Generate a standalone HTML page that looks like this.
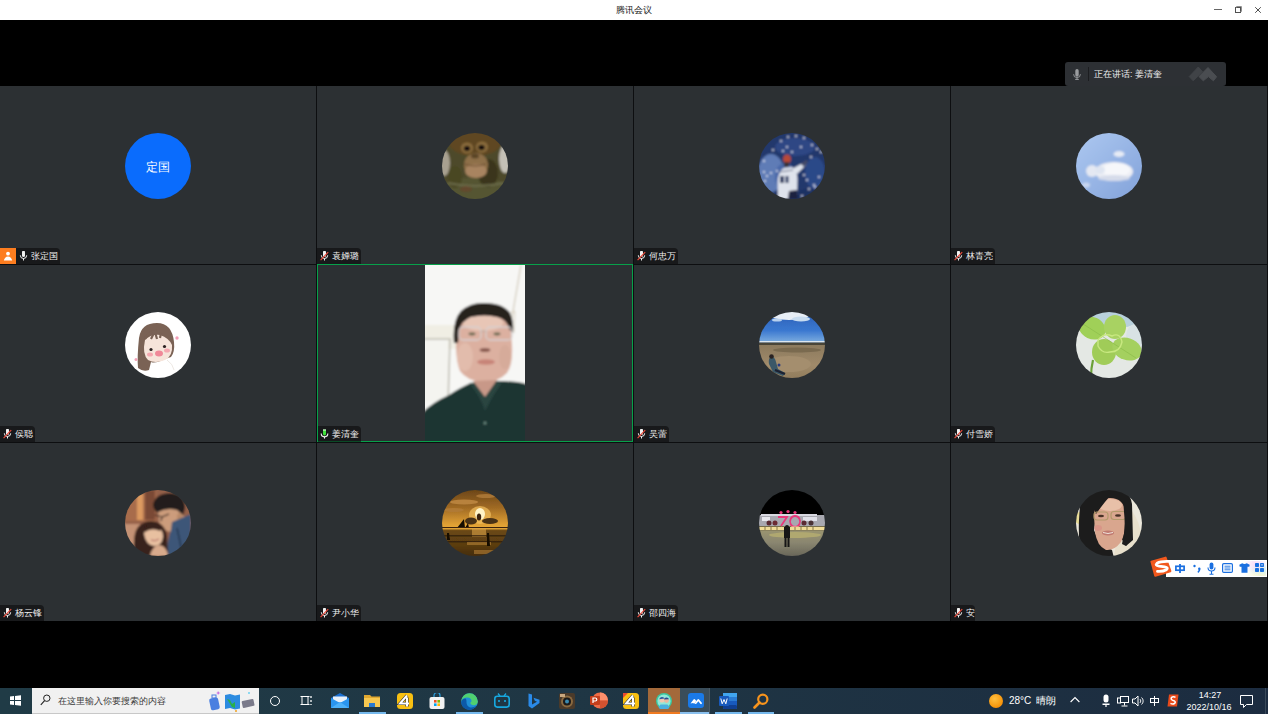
<!DOCTYPE html>
<html><head><meta charset="utf-8">
<style>
*{margin:0;padding:0;box-sizing:border-box}
html,body{width:1268px;height:714px;overflow:hidden;background:#000;font-family:"Liberation Sans",sans-serif}
.abs{position:absolute}
#title{left:0;top:0;width:1268px;height:20px;background:#fff}
#title .t{left:0;width:1268px;top:4px;text-align:center;font-size:9px;color:#111;line-height:12px}
.tile{position:absolute;background:#2c3033}
.div{position:absolute;background:#0d0e10}
.av{position:absolute;width:66px;height:66px;border-radius:50%;overflow:hidden}
.lbl{position:absolute;height:16px;background:#18191b;border-top-right-radius:4px;color:#f0f0f0;font-size:9px;line-height:16px;white-space:nowrap}
.lbl .nm{position:absolute;left:15px;top:0}
.mic{position:absolute;left:3px;top:3px;width:9px;height:10px}
#tb{left:0;top:688px;width:1268px;height:26px;background:linear-gradient(90deg,#203b46 0%,#1f3644 45%,#1c2c40 100%)}
</style></head><body>
<div id="title" class="abs"><div class="t abs">腾讯会议</div></div>
<div class="abs" style="left:1214px;top:9px;width:8px;height:1px;background:#666"></div>
<svg class="abs" style="left:1235px;top:6px" width="7" height="7" viewBox="0 0 7 7"><rect x="0.5" y="1.5" width="5" height="5" fill="none" stroke="#505050" stroke-width="1"/><path d="M1.5 1.5V0.5H6.5V5.5H5.5" fill="none" stroke="#909090" stroke-width="1"/></svg>
<svg class="abs" style="left:1255px;top:7px" width="6" height="6" viewBox="0 0 6 6"><path d="M0.2 0.2L5.8 5.8M5.8 0.2L0.2 5.8" stroke="#505050" stroke-width="1"/></svg>

<!-- tiles -->
<div class="tile" style="left:0;top:86px;width:1268px;height:535px"></div>
<!-- vertical dividers -->
<div class="div" style="left:316px;top:86px;width:1px;height:535px"></div>
<div class="div" style="left:633px;top:86px;width:1px;height:535px"></div>
<div class="div" style="left:950px;top:86px;width:1px;height:535px"></div>
<div class="div" style="left:1267px;top:86px;width:1px;height:535px"></div>
<!-- horizontal dividers -->
<div class="div" style="left:0;top:264px;width:1268px;height:1px"></div>
<div class="div" style="left:0;top:442px;width:1268px;height:1px"></div>

<!-- avatars row1 -->
<div class="abs" style="left:125px;top:133px;width:66px;height:66px;border-radius:50%;background:#0a6cfd"></div><div class="abs" style="left:125px;top:160px;width:66px;text-align:center;font-size:11.5px;line-height:14px;color:#fff">定国</div>
<svg class="abs" style="left:442px;top:133px" width="66" height="66" viewBox="0 0 66 66"><defs><clipPath id="c442_133"><circle cx="33" cy="33" r="33"/></clipPath><filter id="f442_133" x="-20%" y="-20%" width="140%" height="140%"><feGaussianBlur stdDeviation="0.9"/></filter></defs><g clip-path="url(#c442_133)"><g filter="url(#f442_133)"><rect x="-5" y="-5" width="76" height="76" fill="#4e4a2a"/><ellipse cx="2" cy="30" rx="6" ry="13" fill="#a8a090"/><ellipse cx="63" cy="26" rx="6" ry="14" fill="#c4c0b6"/><ellipse cx="33" cy="10" rx="26" ry="13" fill="#5e4620"/><ellipse cx="33" cy="58" rx="34" ry="14" fill="#545430"/><ellipse cx="46" cy="40" rx="10" ry="14" fill="#3a361a"/><ellipse cx="13" cy="44" rx="7" ry="11" fill="#4a4624"/><ellipse cx="34" cy="32" rx="12" ry="12" fill="#8e7048"/><ellipse cx="34" cy="38" rx="11" ry="7" fill="#a88460"/><ellipse cx="25" cy="15" rx="6" ry="5.5" fill="#8a6c3c"/><ellipse cx="40" cy="14" rx="6" ry="5.5" fill="#8a6c3c"/><ellipse cx="25" cy="15.5" rx="3.2" ry="2.8" fill="#140f08"/><ellipse cx="39.5" cy="14.5" rx="3.2" ry="2.8" fill="#140f08"/><ellipse cx="33" cy="23" rx="4" ry="2.5" fill="#5a4428"/><path d="M22 31 Q33 35 44 31" stroke="#6a4c30" stroke-width="1" fill="none"/><path d="M6 50 Q33 56 62 50" stroke="#6a6a48" stroke-width="2" fill="none"/><ellipse cx="24" cy="56" rx="6" ry="3" fill="#7a3a2a" opacity="0.4"/></g></g></svg>
<svg class="abs" style="left:759px;top:133px" width="66" height="66" viewBox="0 0 66 66"><defs><clipPath id="c759_133"><circle cx="33" cy="33" r="33"/></clipPath><filter id="f759_133" x="-20%" y="-20%" width="140%" height="140%"><feGaussianBlur stdDeviation="0.9"/></filter></defs><g clip-path="url(#c759_133)"><g filter="url(#f759_133)"><rect x="-5" y="-5" width="76" height="76" fill="#22376c"/><ellipse cx="12" cy="40" rx="13" ry="19" fill="#5e7cb6"/><ellipse cx="26" cy="44" rx="10" ry="14" fill="#4a68a8"/><ellipse cx="36" cy="14" rx="20" ry="9" fill="#2e4684"/><ellipse cx="56" cy="40" rx="10" ry="16" fill="#2c4888"/><ellipse cx="50" cy="62" rx="14" ry="6" fill="#1e3064"/><path d="M19 66 L18.5 50 Q19 38 25 35 L33 34 Q38 37 38.5 46 L38 66z" fill="#dfe3ec"/><path d="M33 36 L44 30 L47 32 L38 41z" fill="#e0e4ec"/><path d="M42 31 L47 27 L49 29 L45 34z" fill="#454c68"/><ellipse cx="28" cy="26" rx="4" ry="4.5" fill="#b84838"/><rect x="25" y="29" width="5" height="5" fill="#3a3038"/><path d="M21 43 h4 v7 h-4z M26.5 43 h3 v7 h-3z" fill="#2a3a64"/><path d="M20 39 L34 37" stroke="#6a7088" stroke-width="1"/><path d="M30 58 L38 57 L39 66 L29 66z" fill="#1e2440"/><circle cx="14" cy="17" r="0.9" fill="#f4f6ff"/><circle cx="22" cy="8" r="0.9" fill="#f4f6ff"/><circle cx="29" cy="4" r="0.9" fill="#f4f6ff"/><circle cx="37" cy="3" r="0.9" fill="#f4f6ff"/><circle cx="45" cy="5" r="0.9" fill="#f4f6ff"/><circle cx="53" cy="12" r="0.9" fill="#f4f6ff"/><circle cx="58" cy="16" r="0.9" fill="#f4f6ff"/><circle cx="62" cy="19" r="0.9" fill="#f4f6ff"/><circle cx="5" cy="28" r="0.9" fill="#f4f6ff"/><circle cx="5" cy="39" r="0.9" fill="#f4f6ff"/><circle cx="8" cy="43" r="0.9" fill="#f4f6ff"/><circle cx="12" cy="40" r="0.9" fill="#f4f6ff"/><circle cx="18" cy="38" r="0.9" fill="#f4f6ff"/><circle cx="42" cy="14" r="0.9" fill="#f4f6ff"/><circle cx="28" cy="14" r="0.9" fill="#f4f6ff"/><circle cx="55" cy="52" r="0.9" fill="#f4f6ff"/><circle cx="45" cy="42" r="0.9" fill="#f4f6ff"/><circle cx="48" cy="47" r="0.9" fill="#f4f6ff"/><circle cx="50" cy="56" r="0.9" fill="#f4f6ff"/><circle cx="56" cy="54" r="0.9" fill="#f4f6ff"/><circle cx="43" cy="63" r="0.9" fill="#f4f6ff"/><circle cx="6" cy="48" r="0.9" fill="#f4f6ff"/><circle cx="24" cy="18" r="0.9" fill="#f4f6ff"/><circle cx="33" cy="19" r="0.9" fill="#f4f6ff"/><circle cx="60" cy="44" r="0.9" fill="#f4f6ff"/><circle cx="52" cy="24" r="0.9" fill="#f4f6ff"/></g></g></svg>
<svg class="abs" style="left:1076px;top:133px" width="66" height="66" viewBox="0 0 66 66"><defs><clipPath id="c1076_133"><circle cx="33" cy="33" r="33"/></clipPath><filter id="f1076_133" x="-20%" y="-20%" width="140%" height="140%"><feGaussianBlur stdDeviation="0.8"/></filter></defs><g clip-path="url(#c1076_133)"><g filter="url(#f1076_133)"><defs><linearGradient id="skyg" x1="0" y1="0" x2="1" y2="1"><stop offset="0" stop-color="#b0cbf2"/><stop offset="1" stop-color="#7f9fd8"/></linearGradient></defs><rect x="-5" y="-5" width="76" height="76" fill="url(#skyg)"/><ellipse cx="38" cy="38.5" rx="19" ry="9.5" fill="#eceef4"/><ellipse cx="40" cy="37" rx="14" ry="7" fill="#f6f7fa"/><ellipse cx="16" cy="38" rx="6" ry="6" fill="#e4e8f2"/><ellipse cx="24" cy="37" rx="5" ry="4" fill="#dfe5f1"/><ellipse cx="43" cy="21" rx="5.5" ry="3" fill="#e6ebf5"/><ellipse cx="10" cy="52" rx="4" ry="2.5" fill="#c8d6f0"/><ellipse cx="38" cy="45" rx="16" ry="3" fill="#d6dcea"/></g></g></svg>
<svg class="abs" style="left:125px;top:312px" width="66" height="66" viewBox="0 0 66 66"><defs><clipPath id="c125_312"><circle cx="33" cy="33" r="33"/></clipPath><filter id="f125_312" x="-20%" y="-20%" width="140%" height="140%"><feGaussianBlur stdDeviation="0.5"/></filter></defs><g clip-path="url(#c125_312)"><g filter="url(#f125_312)"><rect x="-5" y="-5" width="76" height="76" fill="#ffffff"/><path d="M14 26 Q16 11 32 11 Q47 11 49 30 Q50 40 46 45 L40 47 Q30 52 26 50 L24 58 Q18 60 13 56 Q12 45 14 26z" fill="#7a6254"/><path d="M20 28 Q26 22 35 23 Q44 26 47 33 Q48 44 40 48 Q30 52 23 48 Q17 42 20 28z" fill="#f6e4da"/><path d="M20 27 Q23 20 30 19 L26 27 M30 20 L32 27 M36 21 L35 26" stroke="#7a6254" stroke-width="2.2" fill="none"/><circle cx="26" cy="37.5" r="1.6" fill="#2a2020"/><circle cx="39.5" cy="34.5" r="1.6" fill="#2a2020"/><ellipse cx="25" cy="42.5" rx="3" ry="2" fill="#f4a8b0"/><ellipse cx="42" cy="38.5" rx="3" ry="2" fill="#f4a8b0"/><ellipse cx="34" cy="41.5" rx="4" ry="3" fill="#f08898"/><circle cx="52" cy="26" r="1.7" fill="#f4a0b8"/><circle cx="11" cy="47.5" r="1.5" fill="#f4a0b8"/><path d="M42 48 Q48 52 49 58" stroke="#e0d8d0" stroke-width="0.6" fill="none"/></g></g></svg>
<svg class="abs" style="left:425px;top:265px" width="100" height="176" viewBox="0 0 100 176"><defs><filter id="f425_265" x="-20%" y="-20%" width="140%" height="140%"><feGaussianBlur stdDeviation="0.8"/></filter></defs><g><g filter="url(#f425_265)"><rect x="-5" y="-5" width="110" height="190" fill="#f7f7f5"/><rect x="-5" y="60" width="40" height="24" fill="#f0eee4"/><rect x="-5" y="75" width="28" height="62" fill="#f4f4f0"/><path d="M-5 74 L25 74 L23 140" stroke="#c0beb4" stroke-width="1.6" fill="none"/><path d="M86 58 L96 0" stroke="#d0c8b8" stroke-width="1.2"/><path d="M84 48 L90 46 L89 68" stroke="#dcd4c4" stroke-width="1" fill="none"/><path d="M31 70 Q30 50 50 47 Q72 45 85 56 L87 80 Q88 100 82 108 Q72 118 58 117 Q42 116 35 106 Q31 96 31 80z" fill="#dcb0a0"/><ellipse cx="58" cy="58" rx="20" ry="8" fill="#e8c6b6"/><ellipse cx="40" cy="92" rx="8" ry="14" fill="#e2bcac"/><ellipse cx="80" cy="92" rx="6" ry="12" fill="#d6ab9a"/><path d="M29 78 Q27 56 36 46 Q46 37 60 38 Q78 38 85 48 Q89 56 88 68 L84 64 Q82 54 72 52 Q60 49 46 52 Q36 56 34 66 L33 78z" fill="#26201e"/><rect x="34" y="62" width="22" height="13" rx="4" fill="none" stroke="#d6d0d0" stroke-width="1.3"/><rect x="61" y="62" width="26" height="13" rx="4" fill="none" stroke="#d6d0d0" stroke-width="1.3"/><path d="M56 66 L61 66" stroke="#b8a8a0" stroke-width="1"/><ellipse cx="47" cy="69" rx="3.5" ry="1.4" fill="#6a6a50"/><ellipse cx="72" cy="69" rx="3.5" ry="1.4" fill="#6a6a50"/><ellipse cx="60" cy="85" rx="5.5" ry="2" fill="#8a5a50"/><ellipse cx="61" cy="97" rx="9" ry="2.8" fill="#c88478"/><path d="M-5 150 Q6 138 24 130 Q36 122 46 118 L74 116 Q92 116 105 120 L105 185 L-5 185z" fill="#1c3431"/><path d="M44 118 Q56 132 60 146 Q68 130 78 116z" fill="#294440"/><path d="M48 116 L60 132 L72 115z" fill="#c89888"/><circle cx="60" cy="158" r="1.5" fill="#6a8a80"/></g></g></svg>
<svg class="abs" style="left:759px;top:312px" width="66" height="66" viewBox="0 0 66 66"><defs><clipPath id="c759_312"><circle cx="33" cy="33" r="33"/></clipPath><filter id="f759_312" x="-20%" y="-20%" width="140%" height="140%"><feGaussianBlur stdDeviation="0.6"/></filter></defs><g clip-path="url(#c759_312)"><g filter="url(#f759_312)"><defs><linearGradient id="dsky" x1="0" y1="0" x2="0" y2="1"><stop offset="0" stop-color="#2858b0"/><stop offset="0.65" stop-color="#3a78d0"/><stop offset="1" stop-color="#80b0e0"/></linearGradient><linearGradient id="dgr" x1="0" y1="0" x2="0" y2="1"><stop offset="0" stop-color="#8c7a5e"/><stop offset="0.5" stop-color="#a08a6a"/><stop offset="1" stop-color="#8a7656"/></linearGradient></defs><rect x="-5" y="-5" width="76" height="36" fill="url(#dsky)"/><ellipse cx="30" cy="3" rx="20" ry="5" fill="#e8eef6"/><ellipse cx="42" cy="7" rx="9" ry="2.5" fill="#c8dcf0"/><ellipse cx="18" cy="8" rx="5" ry="1.5" fill="#b8d0ee"/><rect x="-5" y="29" width="76" height="1.5" fill="#dde6ee"/><rect x="-5" y="30.5" width="76" height="2.5" fill="#4a4438"/><rect x="-5" y="33" width="76" height="40" fill="url(#dgr)"/><ellipse cx="38" cy="38" rx="24" ry="2.5" fill="#7a6a50"/><ellipse cx="30" cy="52" rx="22" ry="8" fill="#a48e6e"/><path d="M12 44 Q9 47 10 52 L14 60 L24 64 L26 61 L19 57 L17 50 Q16 45 12 44z" fill="#3a5868"/><circle cx="12.5" cy="44.5" r="2.3" fill="#2a2420"/><path d="M16 58 L26 62" stroke="#1a2030" stroke-width="2.2"/><circle cx="20" cy="53" r="1.5" fill="#2a3a80"/></g></g></svg>
<svg class="abs" style="left:1076px;top:312px" width="66" height="66" viewBox="0 0 66 66"><defs><clipPath id="c1076_312"><circle cx="33" cy="33" r="33"/></clipPath><filter id="f1076_312" x="-20%" y="-20%" width="140%" height="140%"><feGaussianBlur stdDeviation="0.7"/></filter></defs><g clip-path="url(#c1076_312)"><g filter="url(#f1076_312)"><rect x="-5" y="-5" width="76" height="76" fill="#e4e8e4"/><ellipse cx="40" cy="6" rx="24" ry="10" fill="#b8d0dc"/><ellipse cx="60" cy="24" rx="10" ry="12" fill="#d8e2e4"/><ellipse cx="16" cy="16" rx="14" ry="11" fill="#a0d058" transform="rotate(25 16 16)"/><ellipse cx="39" cy="15" rx="11" ry="12" fill="#a8d262"/><ellipse cx="28" cy="40" rx="12" ry="13" fill="#a0cc58"/><ellipse cx="51" cy="37" rx="15" ry="11" fill="#a4d05e" transform="rotate(20 51 37)"/><path d="M4 10 L60 46" stroke="#88b848" stroke-width="0.6"/><path d="M22 28 Q28 20 36 24 Q44 20 46 30 Q44 40 34 40 Q26 42 22 34z" fill="none" stroke="#c8e880" stroke-width="1.4"/><path d="M17 48 Q15 56 15 66" stroke="#6aa038" stroke-width="2.2" fill="none"/></g></g></svg>
<svg class="abs" style="left:125px;top:490px" width="66" height="66" viewBox="0 0 66 66"><defs><clipPath id="c125_490"><circle cx="33" cy="33" r="33"/></clipPath><filter id="f125_490" x="-20%" y="-20%" width="140%" height="140%"><feGaussianBlur stdDeviation="0.8"/></filter></defs><g clip-path="url(#c125_490)"><g filter="url(#f125_490)"><rect x="-5" y="-5" width="76" height="76" fill="#946048"/><rect x="-5" y="-5" width="36" height="36" fill="#a86c4c"/><rect x="12" y="4" width="6" height="26" fill="#dc9a60"/><rect x="20" y="0" width="10" height="30" fill="#7a4a34"/><rect x="-5" y="34" width="20" height="24" fill="#c49274"/><path d="M28 14 Q31 3 46 3 Q60 4 60 18 L58 26 L34 24 Q28 20 28 14z" fill="#221c1c"/><path d="M33 22 Q42 17 52 20 L59 26 Q62 34 56 39 L46 42 Q36 40 34 32z" fill="#cc9c7c"/><ellipse cx="55" cy="27" rx="3" ry="4" fill="#b88868"/><path d="M30 25 L37 27 L44 24 M37 27 L36 31" stroke="#1a1010" stroke-width="1.1" fill="none"/><path d="M47 32 L66 24 L66 66 L42 66 Q42 50 46 40z" fill="#3c5678"/><path d="M52 38 L58 66" stroke="#24344e" stroke-width="1.4"/><path d="M9 52 Q9 32 26 31 Q40 32 42 46 L43 66 L12 66 Q8 60 9 52z" fill="#38201a"/><path d="M19 44 Q20 35 29 35 Q38 37 38 47 Q37 56 29 56 Q21 55 19 44z" fill="#e8c0a0"/><path d="M18 38 Q26 32 37 37 L35 41 Q27 37 20 42z" fill="#38201a"/><path d="M25 66 Q27 56 34 55 Q42 56 43 66z" fill="#d8aa8c"/><path d="M26 50 Q30 52 34 49" stroke="#a85858" stroke-width="1" fill="none"/></g></g></svg>
<svg class="abs" style="left:442px;top:490px" width="66" height="66" viewBox="0 0 66 66"><defs><clipPath id="c442_490"><circle cx="33" cy="33" r="33"/></clipPath><filter id="f442_490" x="-20%" y="-20%" width="140%" height="140%"><feGaussianBlur stdDeviation="0.7"/></filter></defs><g clip-path="url(#c442_490)"><g filter="url(#f442_490)"><defs><linearGradient id="ssky" x1="0" y1="0" x2="0" y2="1"><stop offset="0" stop-color="#5e3c14"/><stop offset="0.3" stop-color="#a06a24"/><stop offset="0.52" stop-color="#e0a034"/><stop offset="0.57" stop-color="#e8a838"/><stop offset="0.6" stop-color="#6a4814"/><stop offset="0.8" stop-color="#5a3c10"/><stop offset="1" stop-color="#3a2408"/></linearGradient></defs><rect x="-5" y="-5" width="76" height="76" fill="url(#ssky)"/><ellipse cx="22" cy="12" rx="14" ry="2.5" fill="#b8823c"/><ellipse cx="44" cy="6" rx="10" ry="2" fill="#a87434"/><ellipse cx="12" cy="20" rx="10" ry="2" fill="#b07a34"/><ellipse cx="38" cy="25" rx="11" ry="9" fill="#f4c060" opacity="0.7"/><ellipse cx="38" cy="24" rx="5" ry="6" fill="#fff4c8"/><ellipse cx="29" cy="31" rx="6" ry="3.5" fill="#4a3014"/><ellipse cx="48" cy="31" rx="8" ry="3" fill="#4a3014"/><ellipse cx="37" cy="27" rx="2.2" ry="3.5" fill="#3a2410"/><path d="M15 38 L22 29 L23 38z M23 38 L26 33 L27 38z" fill="#140c04"/><rect x="-5" y="37" width="76" height="1" fill="#3a2408"/><rect x="30" y="38" width="14" height="9" fill="#d8a048" opacity="0.6"/><rect x="-5" y="45" width="76" height="1.5" fill="#2a1a06" opacity="0.7"/><rect x="-5" y="51" width="76" height="1.5" fill="#2a1a06" opacity="0.7"/><rect x="25" y="52" width="24" height="3" fill="#c89040" opacity="0.5"/><rect x="32" y="60" width="20" height="4" fill="#c89040" opacity="0.5"/><path d="M45 43 L47 43 L48 56 L45 56z" fill="#140c04"/><path d="M5 43 L7 43 L8 50 L5 50z" fill="#140c04"/></g></g></svg>
<svg class="abs" style="left:759px;top:490px" width="66" height="66" viewBox="0 0 66 66"><defs><clipPath id="c759_490"><circle cx="33" cy="33" r="33"/></clipPath><filter id="f759_490" x="-20%" y="-20%" width="140%" height="140%"><feGaussianBlur stdDeviation="0.6"/></filter></defs><g clip-path="url(#c759_490)"><g filter="url(#f759_490)"><defs><linearGradient id="npl" x1="0" y1="0" x2="0" y2="1"><stop offset="0" stop-color="#9a9470"/><stop offset="0.4" stop-color="#8a8670"/><stop offset="1" stop-color="#5e5c52"/></linearGradient></defs><rect x="-5" y="-5" width="76" height="76" fill="#000"/><rect x="-5" y="25" width="76" height="11" fill="#a8a8b0"/><rect x="2" y="24" width="56" height="2" fill="#d8d8e0"/><rect x="3" y="27" width="8" height="4" fill="#e8e8ee"/><rect x="44" y="27" width="14" height="4" fill="#e0e0e8"/><circle cx="10" cy="33" r="2.5" fill="#5a2a30"/><circle cx="16" cy="33" r="2.5" fill="#6a2a30"/><circle cx="45" cy="33" r="2.5" fill="#5a2a30"/><circle cx="52" cy="33" r="2.5" fill="#4a3034"/><path d="M19 27 h9 l-6 9 M36 26 a5 5.5 0 1 0 0.1 0z" stroke="#e8387a" stroke-width="1.8" fill="none"/><circle cx="22" cy="22.5" r="1.6" fill="#e8387a"/><circle cx="29" cy="21.5" r="1.6" fill="#e8387a"/><circle cx="36" cy="22.5" r="1.6" fill="#e8387a"/><rect x="-5" y="36.5" width="76" height="4" fill="#f0dc98"/><path d="M6 37v3M12 37v3M18 37v3M36 37v3M42 37v3M48 37v3M54 37v3" stroke="#6a5a30" stroke-width="0.8"/><rect x="-5" y="40.5" width="76" height="30" fill="url(#npl)"/><ellipse cx="36" cy="45" rx="26" ry="3" fill="#b0a870"/><rect x="25" y="37" width="6" height="11" fill="#141414"/><rect x="25.5" y="48" width="2" height="9" fill="#141414"/><rect x="28.5" y="48" width="2" height="9" fill="#141414"/><circle cx="28" cy="37" r="2" fill="#141414"/></g></g></svg>
<svg class="abs" style="left:1076px;top:490px" width="66" height="66" viewBox="0 0 66 66"><defs><clipPath id="c1076_490"><circle cx="33" cy="33" r="33"/></clipPath><filter id="f1076_490" x="-20%" y="-20%" width="140%" height="140%"><feGaussianBlur stdDeviation="0.7"/></filter></defs><g clip-path="url(#c1076_490)"><g filter="url(#f1076_490)"><rect x="-5" y="-5" width="76" height="76" fill="#ece8dc"/><ellipse cx="3" cy="28" rx="4" ry="6" fill="#e8dc98"/><path d="M48 14 Q66 24 68 66 L38 66 Q42 40 48 14z" fill="#e8e0cc"/><path d="M4 14 Q8 -2 32 -2 Q54 -2 56 14 L57 50 L50 56 L44 46 L48 20 Q40 8 22 14 L18 40 Q22 54 36 60 L38 68 L6 68 Q2 50 3 30z" fill="#1e1c1c"/><path d="M18 26 Q18 8 34 8 Q49 8 50 26 Q50 42 45 52 Q38 61 30 60 Q21 56 19 42z" fill="#d9a68e"/><ellipse cx="34" cy="15" rx="12" ry="6" fill="#e8c0a8"/><path d="M16 16 Q22 4 36 4 Q30 10 20 24z" fill="#1e1c1c"/><rect x="18" y="22" width="14" height="8" rx="3" fill="none" stroke="#b49a6c" stroke-width="1.2"/><rect x="35" y="21.5" width="15" height="8" rx="3" fill="none" stroke="#b49a6c" stroke-width="1.2"/><ellipse cx="25" cy="26" rx="3" ry="1.2" fill="#4a3028"/><ellipse cx="42" cy="25.5" rx="3" ry="1.2" fill="#4a3028"/><ellipse cx="22" cy="38" rx="4" ry="3" fill="#d88a84" opacity="0.6"/><ellipse cx="32" cy="43" rx="6" ry="2.4" fill="#c07a70"/><path d="M27 42.5 Q32 44.5 37 42.5" stroke="#f0e4dc" stroke-width="1" fill="none"/><path d="M47 8 Q55 20 55 36 Q54 48 50 56 L46 54 Q50 40 48 22z" fill="#1e1c1c"/></g></g></svg>
<!-- green active border -->
<div class="abs" style="left:317px;top:264px;width:316px;height:178px;border:1px solid #07a04a"></div>

<div class="abs" style="left:0;top:248px;width:16px;height:16px;background:#fd7d1f"><svg class="abs" style="left:3px;top:3px" width="10" height="10" viewBox="0 0 10 10"><circle cx="5" cy="2.6" r="1.9" fill="#fff"/><path d="M0.8 9.6 Q1.6 5.6 5 5.4 Q8.4 5.6 9.2 9.6z" fill="#fff"/></svg></div>
<div class="lbl" style="left:16px;top:248px;width:44px"><svg class="mic" viewBox="0 0 9 10"><path d="M3 1.2a1.5 1.5 0 0 1 3 0V4.6a1.5 1.5 0 0 1-3 0z" fill="#f2f2f2"/><path d="M1.3 4.3a3.2 3.2 0 0 0 6.4 0" stroke="#f2f2f2" stroke-width="1" fill="none"/><path d="M4.5 7.5V9.5" stroke="#f2f2f2" stroke-width="1"/></svg><span class="nm">张定国</span></div>
<div class="lbl" style="left:317px;top:248px;width:44px"><svg class="mic" viewBox="0 0 9 10"><path d="M3 1.2a1.5 1.5 0 0 1 3 0V4.6a1.5 1.5 0 0 1-3 0z" fill="#f2f2f2"/><path d="M1.3 4.3a3.2 3.2 0 0 0 6.4 0" stroke="#f2f2f2" stroke-width="1" fill="none"/><path d="M4.5 7.5V9.5" stroke="#f2f2f2" stroke-width="1"/><path d="M0.6 9.2L8.2 1.2" stroke="#e8493b" stroke-width="1.2"/></svg><span class="nm">袁婵璐</span></div>
<div class="lbl" style="left:634px;top:248px;width:44px"><svg class="mic" viewBox="0 0 9 10"><path d="M3 1.2a1.5 1.5 0 0 1 3 0V4.6a1.5 1.5 0 0 1-3 0z" fill="#f2f2f2"/><path d="M1.3 4.3a3.2 3.2 0 0 0 6.4 0" stroke="#f2f2f2" stroke-width="1" fill="none"/><path d="M4.5 7.5V9.5" stroke="#f2f2f2" stroke-width="1"/><path d="M0.6 9.2L8.2 1.2" stroke="#e8493b" stroke-width="1.2"/></svg><span class="nm">何忠万</span></div>
<div class="lbl" style="left:951px;top:248px;width:44px"><svg class="mic" viewBox="0 0 9 10"><path d="M3 1.2a1.5 1.5 0 0 1 3 0V4.6a1.5 1.5 0 0 1-3 0z" fill="#f2f2f2"/><path d="M1.3 4.3a3.2 3.2 0 0 0 6.4 0" stroke="#f2f2f2" stroke-width="1" fill="none"/><path d="M4.5 7.5V9.5" stroke="#f2f2f2" stroke-width="1"/><path d="M0.6 9.2L8.2 1.2" stroke="#e8493b" stroke-width="1.2"/></svg><span class="nm">林青亮</span></div>
<div class="lbl" style="left:0px;top:426px;width:35px"><svg class="mic" viewBox="0 0 9 10"><path d="M3 1.2a1.5 1.5 0 0 1 3 0V4.6a1.5 1.5 0 0 1-3 0z" fill="#f2f2f2"/><path d="M1.3 4.3a3.2 3.2 0 0 0 6.4 0" stroke="#f2f2f2" stroke-width="1" fill="none"/><path d="M4.5 7.5V9.5" stroke="#f2f2f2" stroke-width="1"/><path d="M0.6 9.2L8.2 1.2" stroke="#e8493b" stroke-width="1.2"/></svg><span class="nm">侯聪</span></div>
<div class="lbl" style="left:318px;top:426px;width:43px;height:15px"><div class="abs" style="left:0;top:15px;width:43px;height:1px;background:#0a4a26"></div><svg class="mic" style="left:2px" viewBox="0 0 9 10"><path d="M3 0.5h3v4.5a1.5 1.5 0 0 1-3 0z" fill="#3fe03a"/><path d="M3 0.5h3v1h-3z" fill="#f2f2f2"/><path d="M1.2 4.6a3.3 3.3 0 0 0 6.6 0" stroke="#f2f2f2" stroke-width="1.1" fill="none"/><path d="M4.5 7.8V9.6" stroke="#f2f2f2" stroke-width="1.1"/></svg><span class="nm" style="left:14px">姜清奎</span></div>
<div class="lbl" style="left:634px;top:426px;width:35px"><svg class="mic" viewBox="0 0 9 10"><path d="M3 1.2a1.5 1.5 0 0 1 3 0V4.6a1.5 1.5 0 0 1-3 0z" fill="#f2f2f2"/><path d="M1.3 4.3a3.2 3.2 0 0 0 6.4 0" stroke="#f2f2f2" stroke-width="1" fill="none"/><path d="M4.5 7.5V9.5" stroke="#f2f2f2" stroke-width="1"/><path d="M0.6 9.2L8.2 1.2" stroke="#e8493b" stroke-width="1.2"/></svg><span class="nm">吴蕾</span></div>
<div class="lbl" style="left:951px;top:426px;width:44px"><svg class="mic" viewBox="0 0 9 10"><path d="M3 1.2a1.5 1.5 0 0 1 3 0V4.6a1.5 1.5 0 0 1-3 0z" fill="#f2f2f2"/><path d="M1.3 4.3a3.2 3.2 0 0 0 6.4 0" stroke="#f2f2f2" stroke-width="1" fill="none"/><path d="M4.5 7.5V9.5" stroke="#f2f2f2" stroke-width="1"/><path d="M0.6 9.2L8.2 1.2" stroke="#e8493b" stroke-width="1.2"/></svg><span class="nm">付雪娇</span></div>
<div class="lbl" style="left:0px;top:605px;width:44px"><svg class="mic" viewBox="0 0 9 10"><path d="M3 1.2a1.5 1.5 0 0 1 3 0V4.6a1.5 1.5 0 0 1-3 0z" fill="#f2f2f2"/><path d="M1.3 4.3a3.2 3.2 0 0 0 6.4 0" stroke="#f2f2f2" stroke-width="1" fill="none"/><path d="M4.5 7.5V9.5" stroke="#f2f2f2" stroke-width="1"/><path d="M0.6 9.2L8.2 1.2" stroke="#e8493b" stroke-width="1.2"/></svg><span class="nm">杨云锋</span></div>
<div class="lbl" style="left:317px;top:605px;width:44px"><svg class="mic" viewBox="0 0 9 10"><path d="M3 1.2a1.5 1.5 0 0 1 3 0V4.6a1.5 1.5 0 0 1-3 0z" fill="#f2f2f2"/><path d="M1.3 4.3a3.2 3.2 0 0 0 6.4 0" stroke="#f2f2f2" stroke-width="1" fill="none"/><path d="M4.5 7.5V9.5" stroke="#f2f2f2" stroke-width="1"/><path d="M0.6 9.2L8.2 1.2" stroke="#e8493b" stroke-width="1.2"/></svg><span class="nm">尹小华</span></div>
<div class="lbl" style="left:634px;top:605px;width:44px"><svg class="mic" viewBox="0 0 9 10"><path d="M3 1.2a1.5 1.5 0 0 1 3 0V4.6a1.5 1.5 0 0 1-3 0z" fill="#f2f2f2"/><path d="M1.3 4.3a3.2 3.2 0 0 0 6.4 0" stroke="#f2f2f2" stroke-width="1" fill="none"/><path d="M4.5 7.5V9.5" stroke="#f2f2f2" stroke-width="1"/><path d="M0.6 9.2L8.2 1.2" stroke="#e8493b" stroke-width="1.2"/></svg><span class="nm">邵四海</span></div>
<div class="lbl" style="left:951px;top:605px;width:24px"><svg class="mic" viewBox="0 0 9 10"><path d="M3 1.2a1.5 1.5 0 0 1 3 0V4.6a1.5 1.5 0 0 1-3 0z" fill="#f2f2f2"/><path d="M1.3 4.3a3.2 3.2 0 0 0 6.4 0" stroke="#f2f2f2" stroke-width="1" fill="none"/><path d="M4.5 7.5V9.5" stroke="#f2f2f2" stroke-width="1"/><path d="M0.6 9.2L8.2 1.2" stroke="#e8493b" stroke-width="1.2"/></svg><span class="nm">安</span></div>
<div class="abs" style="left:1065px;top:62px;width:161px;height:24px;background:#2d3034;border-radius:3px"></div>
<svg class="abs" style="left:1073px;top:69px" width="8" height="11" viewBox="0 0 8 11"><path d="M2.3 1.8a1.7 1.7 0 0 1 3.4 0V6a1.7 1.7 0 0 1-3.4 0z" fill="#9a9c9f"/><path d="M0.6 5.2a3.4 3.4 0 0 0 6.8 0" stroke="#9a9c9f" stroke-width="0.9" fill="none"/><path d="M4 8.6V10.3M2.2 10.4h3.6" stroke="#9a9c9f" stroke-width="1"/></svg>
<div class="abs" style="left:1088px;top:67px;width:1px;height:14px;background:#1c1d20"></div>
<div class="abs" style="left:1094px;top:68px;font-size:8.5px;line-height:12px;color:#eee;white-space:nowrap">正在讲话: 姜清奎</div>
<svg class="abs" style="left:1188px;top:66px" width="30" height="16" viewBox="0 0 30 16"><path d="M10.3 1 L14.5 5.8 L5.2 14.8 L1.2 10.6z" fill="#404347" stroke="#404347" stroke-width="1" stroke-linejoin="round"/><path d="M20 1.5 L28.6 10.8 L25.4 14.8 L20.4 10.6 L15.3 14.8 L11 10.6z" fill="#4a4d51" stroke="#4a4d51" stroke-width="1" stroke-linejoin="round"/></svg>

<!-- sogou ime bar -->
<div class="abs" style="left:1166px;top:560px;width:101px;height:17px;background:#fff"></div>
<div class="abs" style="left:1240px;top:561px;width:26px;height:15px;background:radial-gradient(ellipse at 60% 20%,rgba(240,180,240,0.5),rgba(255,255,255,0) 55%),radial-gradient(ellipse at 100% 60%,rgba(170,230,250,0.5),rgba(255,255,255,0) 55%),radial-gradient(ellipse at 80% 100%,rgba(250,240,170,0.6),rgba(255,255,255,0) 55%)"></div>
<svg class="abs" style="left:1150px;top:556px" width="23" height="22" viewBox="0 0 23 22"><path d="M1.4 5.6 L15.6 1.6 L20.4 15.2 L5.2 19.8z" fill="#f1581d" stroke="#f1581d" stroke-width="2" stroke-linejoin="round"/><path d="M18 5.4 Q10.5 5.2 7 7.2 Q4.4 9.4 9.2 10.2 L14.6 10.8 Q19 11.6 16.4 13.8 Q12.8 15.8 7.4 15.4" stroke="#fff" stroke-width="2.7" fill="none" stroke-linecap="round"/></svg>
<svg class="abs" style="left:1175px;top:564px" width="10" height="9" viewBox="0 0 10 9"><rect x="0.9" y="2.3" width="8.2" height="3.9" fill="none" stroke="#1a6fe0" stroke-width="1.7"/><path d="M5 0V9" stroke="#1a6fe0" stroke-width="1.8"/></svg>
<svg class="abs" style="left:1193px;top:564px" width="8" height="9" viewBox="0 0 8 9"><circle cx="1.5" cy="2" r="1.2" fill="#1a6fe0"/><path d="M6 4.5q0.8 0.3 0.5 1.6Q6 7.6 4.8 8.3" stroke="#1a6fe0" stroke-width="1.5" fill="none"/><circle cx="6.3" cy="4.8" r="1.2" fill="#1a6fe0"/></svg>
<svg class="abs" style="left:1207px;top:562px" width="9" height="13" viewBox="0 0 9 13"><rect x="2.6" y="0.5" width="3.8" height="7" rx="1.9" fill="#1a6fe0"/><path d="M1 5.5a3.5 3.5 0 0 0 7 0" stroke="#1a6fe0" stroke-width="1.1" fill="none"/><path d="M4.5 9v3M2.5 12.3h4" stroke="#1a6fe0" stroke-width="1.1"/></svg>
<svg class="abs" style="left:1222px;top:563px" width="11" height="10" viewBox="0 0 11 10"><rect x="0.6" y="0.6" width="9.8" height="8.8" rx="1.2" fill="none" stroke="#1a6fe0" stroke-width="1.2"/><path d="M2.5 3.2h6M2.5 5h6M2.5 6.8h6" stroke="#1a6fe0" stroke-width="0.9"/></svg>
<svg class="abs" style="left:1239px;top:563px" width="11" height="10" viewBox="0 0 11 10"><path d="M0.3 1.8L3.2 0.2Q5.5 1.6 7.8 0.2L10.7 1.8 10.3 3.8 8.5 3.8 8.5 9.8H2.5V3.8H0.7z" fill="#1a6fe0"/></svg>
<svg class="abs" style="left:1255px;top:563px" width="9" height="9" viewBox="0 0 9 9"><rect x="0" y="0" width="4" height="4" rx="0.8" fill="#1a6fe0"/><rect x="5" y="0" width="4" height="4" rx="0.8" fill="#1a6fe0"/><rect x="0" y="5" width="4" height="4" rx="0.8" fill="#1a6fe0"/><rect x="5" y="5" width="4" height="4" rx="0.8" fill="#1a6fe0"/><path d="M5.8 1.9h2.4" stroke="#fff" stroke-width="0.7"/></svg>
<div id="tb" class="abs"></div>
<div id="tbi">
<!-- win logo -->
<svg class="abs" style="left:10px;top:695px" width="11" height="11" viewBox="0 0 11 11"><path d="M0 1.6L4 1.1V5H0z M5 1L11 0.2V5H5z M0 6H4V10L0 9.4z M5 6H11V10.8L5 10z" fill="#fff"/></svg>
<!-- search box -->
<div class="abs" style="left:32px;top:688px;width:227px;height:26px;background:#f1f1f1;border-bottom:1px solid #c8c8c8"></div>
<svg class="abs" style="left:40px;top:694px" width="11" height="12" viewBox="0 0 11 12"><circle cx="6.8" cy="4.2" r="3.2" fill="none" stroke="#222" stroke-width="1"/><path d="M4.6 6.6L0.8 10.8" stroke="#222" stroke-width="1.1"/></svg>
<div class="abs" style="left:58px;top:695px;font-size:9.2px;line-height:12px;color:#3a3a3a;white-space:nowrap">在这里输入你要搜索的内容</div>
<svg class="abs" style="left:207px;top:690px" width="50" height="22" viewBox="0 0 50 22"><rect x="3" y="8" width="9" height="12" rx="2" fill="#4a7fe0" transform="rotate(-12 7 14)"/><rect x="5" y="5" width="4" height="3" fill="none" stroke="#4a7fe0" stroke-width="1"/><path d="M11 1l1 1.5 1.5 0.5-1.5 0.5-1 1.5-0.5-1.5-1.5-0.5 1.5-0.5z" fill="#c86be0"/><path d="M18 5l5-1 5 1.5 5-1v14l-5 1-5-1.5-5 1z" fill="#2c8be0"/><path d="M20 9l3 1 2 4 3-2v6l-3-1z" fill="#2ab04a"/><rect x="35" y="10" width="12" height="7" rx="1" fill="#7a7a8a" transform="rotate(-12 41 13)"/><circle cx="42" cy="3" r="1" fill="#6cd0f0"/><circle cx="29" cy="21" r="1" fill="#f0a020"/></svg>
<!-- cortana -->
<div class="abs" style="left:270px;top:696px;width:10px;height:10px;border:1.3px solid #fff;border-radius:50%"></div>
<!-- task view -->
<svg class="abs" style="left:300px;top:695px" width="13" height="11" viewBox="0 0 13 11"><path d="M0.5 1.5h9M0.5 9.5h9M2 1.5v8M8 1.5v8" stroke="#fff" stroke-width="1" fill="none"/><path d="M11 1v2M11 5v2M11 9v1" stroke="#fff" stroke-width="1.3"/></svg>
<!-- mail -->
<svg class="abs" style="left:331px;top:693px" width="18" height="15" viewBox="0 0 18 15"><path d="M0 5 L9 0 L18 5 V15 H0z" fill="#1a6fd0"/><path d="M2 3.5h14v6H2z" fill="#e8f0f8"/><path d="M0 5 L9 10 L18 5 V15 H0z" fill="#2a95ee"/><path d="M0 15L9 9L18 15z" fill="#4cb0f8"/></svg>
<!-- folder -->
<svg class="abs" style="left:364px;top:694px" width="16" height="14" viewBox="0 0 16 14"><path d="M0 1h6l1.5 1.5H16V13H0z" fill="#e0a830"/><path d="M0 4h16v9H0z" fill="#f8c850"/><path d="M5 9h6v4H5z" fill="#2a7ad0"/></svg>
<div class="abs" style="left:359px;top:712px;width:27px;height:2px;background:#76b9ed"></div>
<!-- yellow 4 -->
<svg class="abs" style="left:397px;top:693px" width="16" height="16" viewBox="0 0 16 16"><rect width="16" height="16" rx="3.5" fill="#f8c012"/><path d="M10 2.5L3 10.5H12M10 4.5V13.5" stroke="#333" stroke-width="3.2" fill="none"/><path d="M10 2.5L3 10.5H12M10 4.5V13.5" stroke="#fff" stroke-width="2" fill="none"/></svg>
<!-- store -->
<svg class="abs" style="left:429px;top:693px" width="16" height="16" viewBox="0 0 16 16"><path d="M5 4V2.5a3 3 0 0 1 6 0V4" stroke="#2aa0e0" stroke-width="1.2" fill="none"/><rect x="0.5" y="4" width="15" height="12" rx="2" fill="#f2f2f2"/><rect x="5" y="7" width="2.6" height="2.6" fill="#f25022"/><rect x="8.4" y="7" width="2.6" height="2.6" fill="#7fba00"/><rect x="5" y="10.4" width="2.6" height="2.6" fill="#00a4ef"/><rect x="8.4" y="10.4" width="2.6" height="2.6" fill="#ffb900"/></svg>
<!-- edge -->
<svg class="abs" style="left:461px;top:693px" width="17" height="17" viewBox="0 0 17 17"><circle cx="8.5" cy="8.5" r="8.3" fill="#1f8fd6"/><path d="M8.5 0.2a8.3 8.3 0 0 1 8.3 8.3c0 2.5-2 3.8-4 3.8-2 0-3.5-1-3.5-2.2 0-0.8 1.2-0.8 1.2-2.3 0-2.3-2.5-3.7-5-3.2C2 5 0.4 7 0.2 9 0.2 4.2 3.8 0.2 8.5 0.2z" fill="#50d070"/><path d="M5.5 9.5c0 3 2.5 5 5 5 1.8 0 3.5-0.7 4.8-2-1.3 2.7-4 4.5-6.8 4.5C3.8 17 0.2 13.3 0.2 9c0.5-2 2-3.5 4-3.5 1.2 0 1.3 2 1.3 4z" fill="#0c59a8"/></svg>
<div class="abs" style="left:456px;top:712px;width:27px;height:2px;background:#76b9ed"></div>
<!-- bilibili -->
<svg class="abs" style="left:494px;top:693px" width="16" height="15" viewBox="0 0 16 15"><path d="M4 0.5L6 3M12 0.5L10 3" stroke="#17a8e0" stroke-width="1.3"/><rect x="0.8" y="3.3" width="14.4" height="10.8" rx="2.5" fill="none" stroke="#17a8e0" stroke-width="1.6"/><path d="M5 7v2M11 7v2" stroke="#17a8e0" stroke-width="1.6"/></svg>
<!-- bing -->
<svg class="abs" style="left:528px;top:693px" width="12" height="16" viewBox="0 0 12 16"><path d="M0.5 0.5L4 1.5V11.5L9 8.8 6.8 7.8 5.5 4.8 11.5 6.8V10L4 15.5 0.5 13z" fill="#2a8ae8"/></svg>
<!-- camera -->
<svg class="abs" style="left:559px;top:693px" width="16" height="16" viewBox="0 0 16 16"><rect width="16" height="16" rx="2" fill="#4a3a2a"/><circle cx="8" cy="8.5" r="6" fill="#8a6a40"/><circle cx="8" cy="8.5" r="4" fill="#1a1a1a"/><circle cx="8" cy="8.5" r="2" fill="#3a8ab0"/><rect x="1" y="1" width="5" height="3" fill="#c8a880"/></svg>
<!-- ppt -->
<svg class="abs" style="left:590px;top:692px" width="18" height="17" viewBox="0 0 18 17"><circle cx="10" cy="8.5" r="8" fill="#ed6c47"/><path d="M10 0.5a8 8 0 0 1 8 8h-8z" fill="#ff8f6b"/><path d="M10 8.5h8a8 8 0 0 1-8 8z" fill="#d35230"/><rect x="0" y="4" width="10" height="9" rx="1" fill="#c43e1c"/><path d="M3 11V6h2.3a1.5 1.5 0 0 1 0 3H3" stroke="#fff" stroke-width="1.2" fill="none"/></svg>
<!-- yellow 4 #2 -->
<svg class="abs" style="left:623px;top:693px" width="16" height="16" viewBox="0 0 16 16"><rect width="16" height="16" rx="3.5" fill="#f8c012"/><path d="M0 0h5L0 5z" fill="#e84a30"/><path d="M10 2.5L3 10.5H12M10 4.5V13.5" stroke="#333" stroke-width="3.2" fill="none"/><path d="M10 2.5L3 10.5H12M10 4.5V13.5" stroke="#fff" stroke-width="2" fill="none"/></svg>
<!-- orange highlighted button -->
<div class="abs" style="left:648px;top:688px;width:32px;height:26px;background:#a3693a"></div>
<div class="abs" style="left:648px;top:712px;width:32px;height:2px;background:#f07a20"></div>
<svg class="abs" style="left:656px;top:693px" width="16" height="16" viewBox="0 0 16 16"><circle cx="8" cy="8" r="8" fill="#3ac8a0"/><circle cx="8" cy="8" r="6.6" fill="#90e8d8"/><circle cx="6" cy="7" r="2.6" fill="#f0c8b0"/><circle cx="10.5" cy="7.5" r="2.4" fill="#e8b8a0"/><path d="M3.3 6.2a2.8 2.6 0 0 1 5.4-0.6z" fill="#2a5aa0"/><path d="M8 6.5a2.6 2.4 0 0 1 5-0.3z" fill="#2a4a90"/><path d="M2.5 14a6 6 0 0 0 11 0l-2-2.5h-7z" fill="#4ab0e0"/></svg>
<!-- active tencent meeting button -->
<div class="abs" style="left:680px;top:688px;width:30px;height:26px;background:#3a4d5a"></div>
<div class="abs" style="left:680px;top:712px;width:30px;height:2px;background:#8ac0ee"></div>
<div class="abs" style="left:709px;top:688px;width:1px;height:26px;background:#4a5a66"></div>
<svg class="abs" style="left:688px;top:693px" width="16" height="15" viewBox="0 0 16 15"><rect width="16" height="15" rx="3" fill="#1a7ae8"/><path d="M2.5 10.5L5.5 6.5Q6.3 5.5 7.1 6.5L8.3 8L6.8 10Q6 11 5.2 10z" fill="#fff"/><path d="M6.5 10.5L9.5 6.5Q10.3 5.5 11.1 6.5L13.8 9.8Q14.4 10.8 13.4 11.1 12.8 11.3 12.3 10.7L10.3 8.3 8.8 10.3Q8 11.3 7.2 10.8z" fill="#fff"/></svg>
<!-- word -->
<svg class="abs" style="left:719px;top:693px" width="18" height="16" viewBox="0 0 18 16"><rect x="4" y="0" width="14" height="16" rx="1.5" fill="#2b7cd3"/><rect x="4" y="0" width="14" height="4" fill="#41a5ee"/><rect x="4" y="8" width="14" height="4" fill="#185abd"/><rect x="4" y="12" width="14" height="4" rx="1" fill="#103f91"/><rect x="0" y="3" width="10" height="10" rx="1" fill="#185abd"/><path d="M1.8 5.5L3.2 10.8 5 6.5 6.8 10.8 8.2 5.5" stroke="#fff" stroke-width="1" fill="none"/></svg>
<div class="abs" style="left:715px;top:712px;width:27px;height:2px;background:#76b9ed"></div>
<!-- orange search magnifier -->
<svg class="abs" style="left:753px;top:693px" width="16" height="16" viewBox="0 0 16 16"><circle cx="9.8" cy="6.2" r="4.6" fill="none" stroke="#f7941d" stroke-width="2.2"/><path d="M6.5 9.5L1.5 14.5" stroke="#f7941d" stroke-width="2.6" stroke-linecap="round"/></svg>
<div class="abs" style="left:748px;top:712px;width:26px;height:2px;background:#76b9ed"></div>

<!-- tray -->
<div class="abs" style="left:989px;top:694px;width:14px;height:14px;border-radius:50%;background:radial-gradient(circle at 40% 35%,#ffc040,#f89a10 60%,#f07a00)"></div>
<div class="abs" style="left:1009px;top:695px;font-size:10px;line-height:12px;color:#fff;white-space:nowrap">28°C</div>
<div class="abs" style="left:1036px;top:695px;font-size:10px;line-height:12px;color:#fff;white-space:nowrap">晴朗</div>
<svg class="abs" style="left:1070px;top:696px" width="10" height="7" viewBox="0 0 10 7"><path d="M0.6 6L5 1.5 9.4 6" stroke="#fff" stroke-width="1.1" fill="none"/></svg>
<svg class="abs" style="left:1102px;top:694px" width="8" height="13" viewBox="0 0 8 13"><rect x="1.5" y="0.5" width="5" height="8" rx="2.5" fill="#fff"/><path d="M0.5 9.5h7v1.5h-7z" fill="#fff"/><path d="M4 11v2" stroke="#fff" stroke-width="1.2"/></svg>
<svg class="abs" style="left:1117px;top:695px" width="12" height="12" viewBox="0 0 12 12"><rect x="3.5" y="1.5" width="8" height="6" fill="none" stroke="#fff" stroke-width="1"/><rect x="0.5" y="3" width="3" height="5" fill="none" stroke="#fff" stroke-width="1"/><path d="M7.5 7.5v3M4.5 11h6" stroke="#fff" stroke-width="1"/></svg>
<svg class="abs" style="left:1132px;top:695px" width="12" height="12" viewBox="0 0 12 12"><path d="M0.5 4h2.5L6 1v10L3 8H0.5z" fill="none" stroke="#fff" stroke-width="1"/><path d="M7.8 4a2.6 2.6 0 0 1 0 4M9.5 2.5a4.5 4.5 0 0 1 0 7" stroke="#fff" stroke-width="0.9" fill="none"/></svg>
<svg class="abs" style="left:1150px;top:696px" width="9" height="10" viewBox="0 0 9 10"><rect x="0.5" y="2.5" width="8" height="4" fill="none" stroke="#fff" stroke-width="1"/><path d="M4.5 0V10" stroke="#fff" stroke-width="1"/></svg>
<svg class="abs" style="left:1167px;top:694px" width="12" height="13" viewBox="0 0 12 13"><path d="M2 0.5h9.5l-1.5 12H0.5z" fill="#e84a1a"/><path d="M8.5 3.3Q7 2.5 5.3 3 3.5 3.8 4.5 5.5 5.5 6.5 7.5 7 9 8 7.5 9.5 5.5 10.5 3.5 9.3" stroke="#fff" stroke-width="1.5" fill="none"/></svg>
<div class="abs" style="left:1188px;top:690px;width:44px;text-align:center;font-size:9px;line-height:10px;color:#fff;white-space:nowrap">14:27</div>
<div class="abs" style="left:1186px;top:702px;width:46px;text-align:center;font-size:9px;line-height:10px;color:#fff;white-space:nowrap">2022/10/16</div>
<svg class="abs" style="left:1240px;top:695px" width="13" height="13" viewBox="0 0 13 13"><path d="M0.5 0.5h12v9h-6l-3 3v-3h-3z" fill="none" stroke="#fff" stroke-width="1"/></svg>
<div class="abs" style="left:1265px;top:688px;width:1px;height:26px;background:#3a4a5a"></div>
</div>

</body></html>
